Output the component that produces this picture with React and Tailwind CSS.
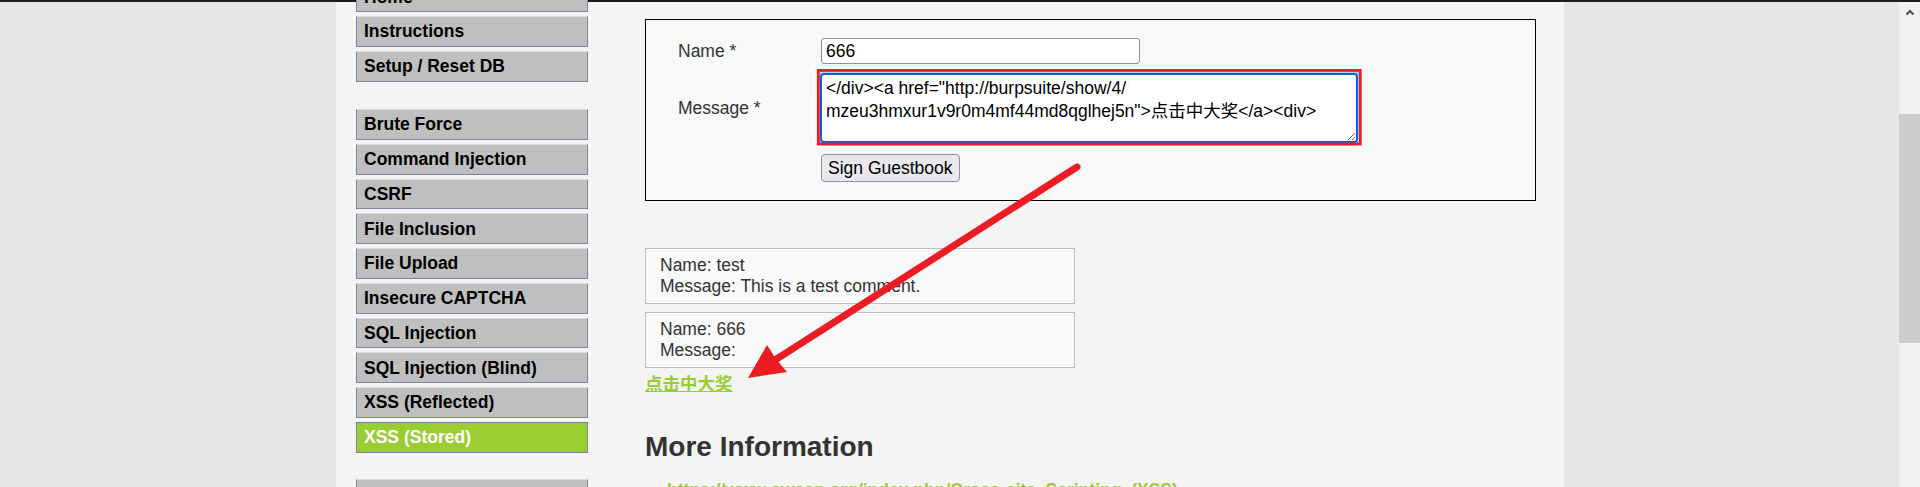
import React from "react";

const menuTop = ["Home", "Instructions", "Setup / Reset DB"];
const menuVulns = [
  "Brute Force",
  "Command Injection",
  "CSRF",
  "File Inclusion",
  "File Upload",
  "Insecure CAPTCHA",
  "SQL Injection",
  "SQL Injection (Blind)",
  "XSS (Reflected)",
  "XSS (Stored)",
];
const menuBottom = ["DVWA Security", "PHP Info", "About"];

const MenuItem = ({ label, active }) => (
  <li
    className={
      active
        ? "h-[30.75px] mb-[4px] flex items-center pl-[7px] border border-[#7a869a] bg-[#9acd32] text-white font-bold text-[17.5px]"
        : "h-[30.75px] mb-[4px] flex items-center pl-[7px] border border-[#7a869a] border-t-[#dcdcdc] bg-[#bfbfbf] text-black font-bold text-[17.5px]"
    }
  >
    {label}
  </li>
);

const Comment = ({ name, message, className }) => (
  <div
    className={`w-[430px] h-[56px] border border-[#c0c0c0] bg-[#f7f8f8] pl-[14px] pt-[6px] text-[17.5px] leading-[21px] text-[#333] ${className}`}
  >
    <div>Name: {name}</div>
    <div>Message: {message}</div>
  </div>
);

// wrapped the way the browser in the screenshot wrapped it
const payload =
  '</div><a href="http://burpsuite/show/4/\nmzeu3hmxur1v9r0m4mf44md8qglhej5n">点击中大奖</a><div>';

export default function App() {
  return (
    <div className="relative w-[1920px] h-[487px] overflow-hidden bg-[#e7e7e7] font-['Liberation_Sans','Noto_Sans_CJK_SC',sans-serif]">
      <div className="h-[2px] bg-[#1c1c1c]" />

      <div className="flex h-[485px]">
        <div className="w-[336px] shrink-0" />

        {/* page container */}
        <div className="w-[1228px] shrink-0 bg-[#f4f4f4] flex pl-[20px]">
          {/* main menu */}
          <div className="w-[232px] shrink-0 -mt-[20.75px]">
            <ul>
              {menuTop.map((m) => (
                <MenuItem key={m} label={m} />
              ))}
            </ul>
            <ul className="mt-[27.5px]">
              {menuVulns.map((m) => (
                <MenuItem key={m} label={m} active={m === "XSS (Stored)"} />
              ))}
            </ul>
            <ul className="mt-[26.5px]">
              {menuBottom.map((m) => (
                <MenuItem key={m} label={m} />
              ))}
            </ul>
          </div>

          {/* main body */}
          <div className="ml-[57px] pt-[17px]">
            <div className="w-[891px] h-[182px] border border-black bg-[#f7f8f8] pl-[32px] pt-[18px] text-[17.5px] text-[#333]">
              <div className="flex items-center h-[26px]">
                <span className="w-[143px]">Name *</span>
                <input
                  readOnly
                  value="666"
                  className="w-[319px] h-[26px] border border-[#8f8f9d] rounded-[3px] bg-white pl-[4px] text-black text-[17.5px] outline-none"
                />
              </div>
              <div className="flex items-center mt-[9px]">
                <span className="w-[143px]">Message *</span>
                <textarea
                  readOnly
                  value={payload}
                  className="-ml-px w-[538px] h-[70px] border-2 border-[#0b63d8] rounded-[4px] bg-white pl-[4px] pt-[2px] text-black text-[17.5px] leading-[23px] outline-none overflow-hidden shadow-[0_0_0_3px_rgba(26,115,232,0.3)]"
                />
              </div>
              <div className="flex mt-[11px]">
                <span className="w-[143px]" />
                <button className="w-[139px] h-[28px] border border-[#8f8f9d] rounded-[4px] bg-[#e9e9ed] text-black text-[17.5px] text-left pl-[6px]">
                  Sign Guestbook
                </button>
              </div>
            </div>

            <Comment name="test" message="This is a test comment." className="mt-[47px]" />
            <Comment name="666" message="" className="mt-[8px]" />

            <a className="block mt-[6px] w-fit text-[17.5px] leading-[21px] font-bold text-[#9acd32] underline">
              点击中大奖
            </a>

            <h2 className="mt-[36px] text-[28px] leading-[32px] font-bold text-[#333]">
              More Information
            </h2>

            <ul className="mt-[17px] pl-[22px] list-disc text-[17.5px] leading-[21px]">
              <li>
                <a className="font-bold text-[#9acd32]">
                  https://www.owasp.org/index.php/Cross-site_Scripting_(XSS)
                </a>
              </li>
            </ul>
          </div>
        </div>

        <div className="flex-1" />

        {/* scrollbar */}
        <div className="w-[21px] shrink-0 bg-[#f1f1f1] flex flex-col">
          <div className="h-[21px] flex items-center justify-center">
            <svg width="10" height="7" viewBox="0 0 10 7">
              <path d="M1.5 5.5 L5 2 L8.5 5.5" fill="none" stroke="#505050" strokeWidth="2" />
            </svg>
          </div>
          <div className="mt-[91px] h-[229px] bg-[#cdcdcd]" />
        </div>
      </div>

      {/* annotation overlay */}
      <svg
        className="absolute inset-0 pointer-events-none"
        width="1920"
        height="487"
        viewBox="0 0 1920 487"
      >
        <rect x="818.3" y="70.4" width="542" height="73.6" fill="none" stroke="#ec1c24" strokeWidth="2.8" />
        <line x1="1077" y1="167" x2="775" y2="360" stroke="#ec1c24" strokeWidth="7" strokeLinecap="round" />
        <polygon points="748,378 767,345 776,359 787,372" fill="#ec1c24" />
      </svg>
    </div>
  );
}
